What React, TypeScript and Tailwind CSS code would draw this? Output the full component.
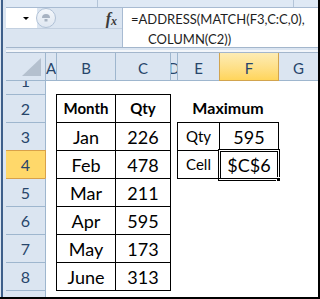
import React from 'react';

type Row = { n: number; b?: string; c?: string; e?: string; f?: string; bold?: boolean };

const rows: Row[] = [
  { n: 2, b: 'Month', c: 'Qty', bold: true },
  { n: 3, b: 'Jan', c: '226', e: 'Qty', f: '595' },
  { n: 4, b: 'Feb', c: '478', e: 'Cell', f: '$C$6' },
  { n: 5, b: 'Mar', c: '211' },
  { n: 6, b: 'Apr', c: '595' },
  { n: 7, b: 'May', c: '173' },
  { n: 8, b: 'June', c: '313' },
];

const RowHead: React.FC<{ n?: number; selected?: boolean; afterSelected?: boolean }> = ({ n, selected, afterSelected }) => (
  <div
    className={`w-[40px] shrink-0 flex items-center justify-center border-r border-t text-[16px] text-[#27456b] ${
      selected
        ? 'bg-[#ffd86a] border-[#d9a149]'
        : afterSelected
        ? 'bg-[#dbe5f1] border-r-[#9eb6ce] border-t-[#d9a149]'
        : 'bg-[#dbe5f1] border-[#9eb6ce]'
    }`}
  >
    {n}
  </div>
);

const ColHead: React.FC<{ label: string; className: string }> = ({ label, className }) => (
  <div className={`flex items-center justify-center overflow-hidden pt-[3px] text-[15px] text-[#27456b] border-b ${className}`}>
    <span className="shrink-0">{label}</span>
  </div>
);

export default function App() {
  return (
    <div className="w-[320px] h-[299px] overflow-hidden flex bg-white border-r-2 border-b-2 border-black font-['Lato','Open_Sans',sans-serif] leading-none">
      <div className="w-[1px] shrink-0 bg-[#dbe5f1]" />
      <div className="w-[2px] shrink-0 bg-[#3e5f8a]" />
      <div className="w-[3px] shrink-0 bg-[#dbe5f1]" />

      <div className="flex-1 flex flex-col min-w-0">
        {/* ribbon remnant */}
        <div className="h-[7px] shrink-0 flex bg-[#dfe9f5]">
          <div className="w-[91px]" />
          <div className="w-px bg-[#b3c4d8]" />
          <div className="w-[195px]" />
          <div className="w-px bg-[#b3c4d8]" />
        </div>
        <div className="h-px shrink-0 bg-[#a8bbd2]" />

        {/* formula bar */}
        <div className="h-[39px] shrink-0 flex">
          <div className="w-[116px] flex flex-col bg-[#dbe5f1]">
            <div className="h-[20px] flex items-center">
              <div className="w-[31px] h-full bg-white flex items-center justify-end pr-[8px]">
                <div className="w-0 h-0 border-l-[3px] border-r-[3px] border-t-[3px] border-l-transparent border-r-transparent border-t-black" />
              </div>
              <div className="w-[20px] h-[20px] -ml-px rounded-full border border-[#b0c1d6] bg-linear-to-b from-[#f4f7fb] to-[#dfe7f1] flex items-center justify-center">
                <svg width="10" height="10" viewBox="0 0 10 10">
                  <path d="M1 5 A4 4 0 0 1 9 5 Z" fill="#a8b3c2" />
                  <rect x="3.5" y="6" width="3" height="2.5" fill="#a8b3c2" />
                </svg>
              </div>
              <div className="flex-1" />
              <div className="pr-[5px] pt-[2px] text-[#3a3a3a] font-['Liberation_Serif',serif] italic font-bold flex items-end">
                <span className="text-[16px]">f</span>
                <span className="text-[12px]">x</span>
              </div>
            </div>
            <div className="h-px bg-[#c3d0e0]" />
            <div className="flex-1" />
          </div>
          <div className="w-px bg-[#a8bbd2]" />
          <div className="flex-1 bg-white pt-[1px] text-[13px] leading-[20px] text-[#1e1e1e] whitespace-nowrap overflow-hidden">
            <div className="pl-[8px]">=ADDRESS(MATCH(F3,C:C,0),</div>
            <div className="pl-[25px]">COLUMN(C2))</div>
          </div>
        </div>

        <div className="h-px shrink-0 bg-[#a3b6cc]" />
        <div className="h-[2px] shrink-0 bg-[#dbe5f1]" />
        <div className="h-[2px] shrink-0 bg-[#f3f6fa]" />
        <div className="h-px shrink-0 bg-[#a3b6cc]" />

        {/* column headers */}
        <div className="h-[28px] shrink-0 flex bg-[#dbe5f1]">
          <div className="w-[40px] shrink-0 border-r border-b border-[#9eb6ce]">
            <svg width="39" height="27" viewBox="0 0 39 27">
              <polygon points="16,23 35,23 35,5" fill="#b4c0ce" />
            </svg>
          </div>
          <ColHead label="A" className="w-[10px] border-[#9eb6ce]" />
          <ColHead label="B" className="w-[59px] border-l border-[#9eb6ce]" />
          <ColHead label="C" className="w-[55px] border-l border-[#9eb6ce]" />
          <ColHead label="D" className="w-[7px] border-l border-[#9eb6ce]" />
          <ColHead label="E" className="w-[42px] border-l border-[#9eb6ce]" />
          <ColHead label="F" className="w-[60px] border-l border-r border-[#d2a44e] bg-linear-to-b from-[#fdecb4] to-[#ffd55a]" />
          <ColHead label="G" className="w-[39px] border-[#9eb6ce]" />
        </div>

        {/* row 1, mostly hidden behind the frozen header */}
        <div className="h-[13px] shrink-0 overflow-hidden">
          <div className="h-[28px] -mt-[14px] flex">
            <div className="w-[40px] shrink-0 flex items-center justify-center border-r border-[#9eb6ce] bg-[#dbe5f1] text-[16px] text-[#27456b]">
              1
            </div>
          </div>
        </div>

        {rows.map((r) => {
          const text = r.bold ? 'text-[15px] font-bold' : 'text-[18px]';
          const box = r.n === 3 || r.n === 4;
          return (
            <div key={r.n} className="h-[28px] shrink-0 flex text-black">
              <RowHead n={r.n} selected={r.n === 4} afterSelected={r.n === 5} />
              <div className="w-[10px] shrink-0" />
              <div className={`w-[59px] shrink-0 flex items-center justify-center border-l border-t border-black ${text}`}>{r.b}</div>
              <div className={`w-[55px] shrink-0 flex items-center justify-center border-l border-t border-black ${text}`}>{r.c}</div>
              <div className="w-[7px] shrink-0 border-l border-black" />
              {r.n === 2 ? (
                <div className="w-[102px] shrink-0 flex items-center justify-center text-[16px] font-bold">Maximum</div>
              ) : (
                <>
                  <div
                    className={`w-[42px] shrink-0 flex items-center justify-center text-[15px] ${
                      box ? 'border-l border-t border-black' : r.n === 5 ? 'border-t border-black' : ''
                    }`}
                  >
                    {r.e}
                  </div>
                  <div
                    className={`relative w-[60px] shrink-0 flex items-center justify-center text-[18px] ${
                      box ? 'border-l border-r border-t border-black' : r.n === 5 ? 'border-t border-black' : ''
                    }`}
                  >
                    {r.f}
                    {r.n === 4 && (
                      <div className="absolute -left-[2px] -right-[2px] -top-[2px] -bottom-[3px] border border-black">
                        <div className="w-full h-full border border-white">
                          <div className="w-full h-full border border-black" />
                        </div>
                        <div className="absolute -right-[2px] -bottom-[2px] w-[5px] h-[5px] bg-black border border-white" />
                      </div>
                    )}
                  </div>
                </>
              )}
              <div className="w-[39px] shrink-0" />
            </div>
          );
        })}

        {/* row 9, cut off */}
        <div className="h-[7px] shrink-0 flex overflow-hidden">
          <RowHead />
          <div className="w-[10px] shrink-0" />
          <div className="w-[59px] shrink-0 border-t border-black" />
          <div className="w-[56px] shrink-0 border-t border-black" />
        </div>
      </div>
    </div>
  );
}
